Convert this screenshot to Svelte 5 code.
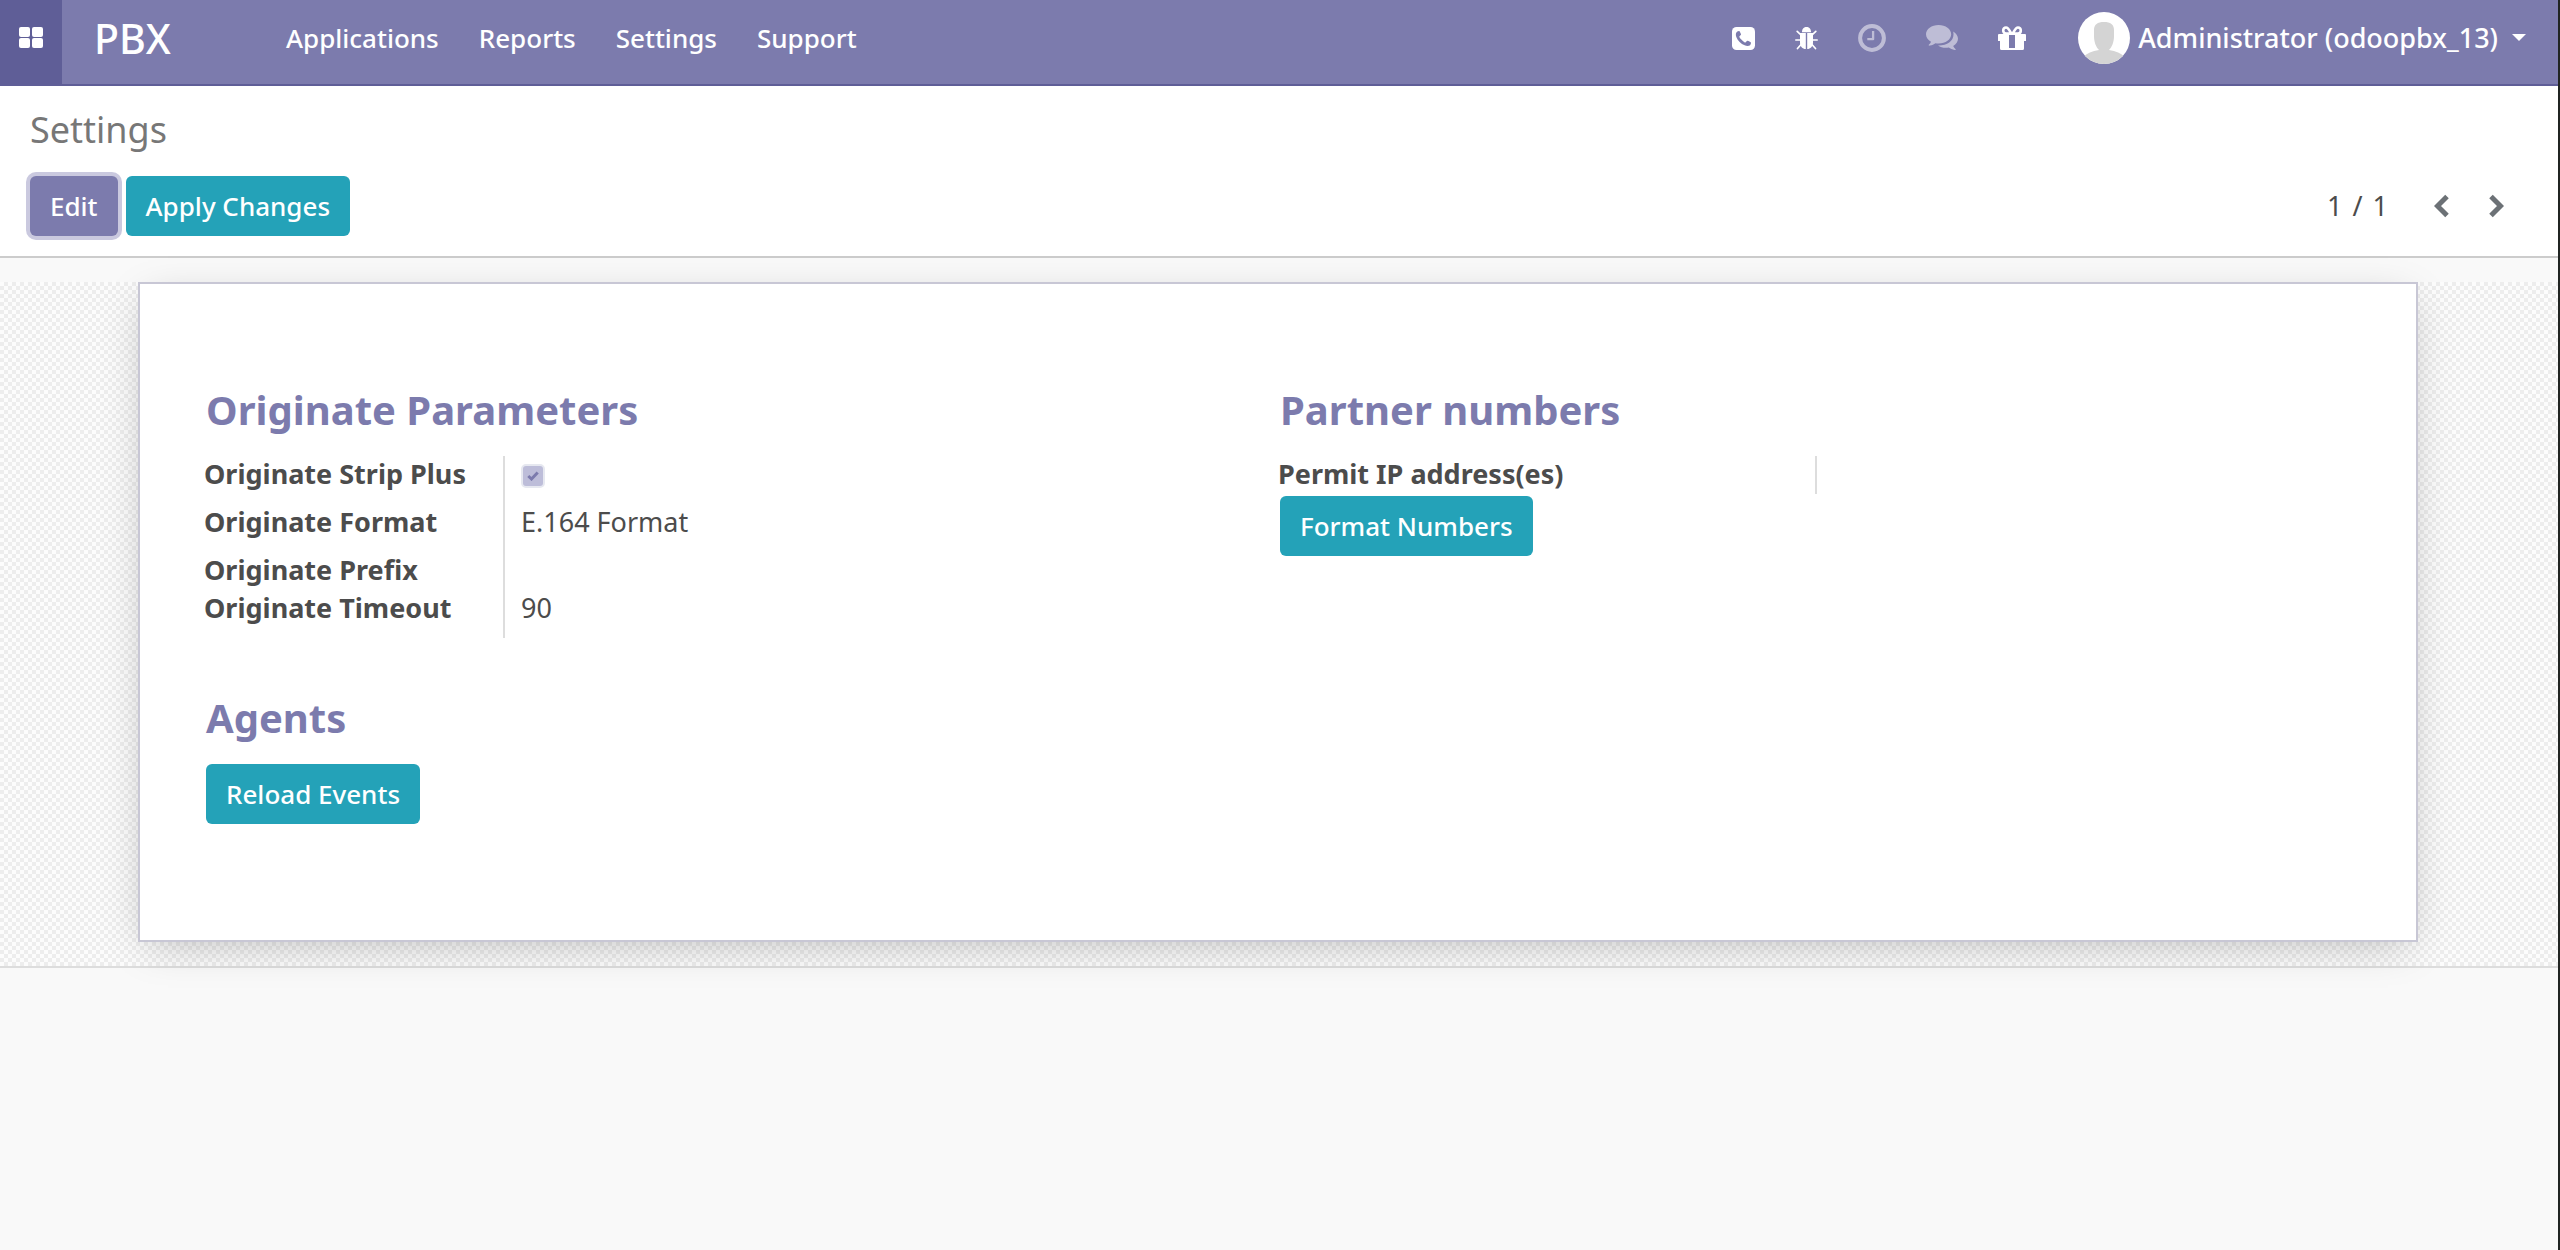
<script>
  const menus = ['Applications', 'Reports', 'Settings', 'Support'];
  let stripPlus = $state(true);
</script>

<div class="page">
  <header class="navbar">
    <button class="apps" aria-label="Applications menu">
      <svg width="25" height="22" viewBox="0 0 25 22" fill="currentColor">
        <rect width="11" height="10" rx="2" />
        <rect x="13" width="11" height="10" rx="2" />
        <rect y="11" width="11" height="10" rx="2" />
        <rect x="13" y="11" width="11" height="10" rx="2" />
      </svg>
    </button>
    <a class="brand" href="#pbx">PBX</a>
    <nav class="menus">
      {#each menus as menu}
        <a href="#{menu.toLowerCase()}">{menu}</a>
      {/each}
    </nav>
    <div class="systray">
      <button aria-label="Phone">
        <svg width="23" height="23" viewBox="0 0 23 23">
          <rect width="23" height="23" rx="4.5" fill="currentColor" />
          <path
            d="M5.3 4.5C6 4.1 6.900 3.800 7.300 4.100C7.800 4.500 8.800 6.600 9 7.200C9.200 8.100 7.300 8.900 7.300 9.700C7.300 10.700 11.600 15 13 15.400C14 15.700 14.700 13.500 15.700 13.700C16.400 13.900 18.500 15 18.900 15.500C19.200 16.100 18.700 17.500 18.100 18.200C17 19.200 14.600 19.300 12.600 18.300C8.900 16.600 5.800 13.600 4.300 9.900C3.400 7.600 3.800 5.500 5.300 4.500Z"
            fill="#7c7bad"
          />
        </svg>
      </button>
      <button aria-label="Debug">
        <svg width="23" height="23" viewBox="0 0 23 23">
          <path d="M7 5.200C7 1.600 9 0 11.500 0S16 1.600 16 5.200Z" fill="currentColor" />
          <path d="M5 6H10.800V22C7.500 22 5 19.600 5 15.500ZM12.200 6H18V15.500C18 19.600 15.500 22 12.200 22Z" fill="currentColor" />
          <path
            d="M6 8 2.200 4.300M17 8 20.800 4.300M5.500 13H.8M17.500 13H22.200M6.300 17.300 2.500 21.500M16.700 17.300 20.500 21.500"
            fill="none"
            stroke="currentColor"
            stroke-width="1.700"
            stroke-linecap="round"
          />
        </svg>
      </button>
      <button class="muted" aria-label="Activities">
        <svg width="28" height="28" viewBox="0 0 28 28" fill="none" stroke="currentColor">
          <circle cx="14" cy="14" r="11.900" stroke-width="4" />
          <path d="M15.100 7V15.200H9.300" stroke-width="2.300" stroke-linejoin="round" />
        </svg>
      </button>
      <button class="muted" aria-label="Messages">
        <svg width="32" height="26" viewBox="0 0 32 26" fill="currentColor">
          <path
            d="M12.600 0C19.600 0 25.200 4.200 25.200 9.300S19.600 18.600 12.600 18.600C11.500 18.600 10.400 18.500 9.400 18.300C7.900 19.400 6.200 20.200 3.900 20.600C2.600 20.800 2.300 20.200 3 19.600C4 18.700 4.700 17.700 5 16.700C1.900 15 0 12.300 0 9.300C0 4.200 5.600 0 12.600 0Z"
          />
          <path
            d="M27.200 6.400C30.100 8.100 32 10.700 32 13.700C32 16.600 30.200 19.300 27.200 21C27.600 22.100 28.400 23.100 29.400 24C30 24.500 29.700 25.200 28.800 25C26.200 24.600 24.300 23.700 22.800 22.600C18.500 23.300 14.700 22.400 12 20.500C21 20.700 27.500 16 27.500 9.500C27.500 8.400 27.400 7.400 27.200 6.400Z"
          />
        </svg>
      </button>
      <button aria-label="What's new">
        <svg width="28" height="25" viewBox="0 0 28 25">
          <path
            d="M0 9Q0 8 1 8H27Q28 8 28 9V15H26V22.500Q26 24 24.500 24H3.500Q2 24 2 22.500V15H0ZM11 9V22H17V9Z"
            fill="currentColor"
            fill-rule="evenodd"
          />
          <path
            d="M13.500 8C11.500 4.500 10.500 1.500 8 1.500C4.300 1.500 4.300 7.500 8 7.500H20C23.700 7.500 23.700 1.500 20 1.500C17.500 1.500 16.500 4.500 14.500 8"
            fill="none"
            stroke="currentColor"
            stroke-width="2.600"
          />
        </svg>
      </button>
      <button class="user">
        <svg class="avatar" width="52" height="52" viewBox="0 0 52 52">
          <defs><clipPath id="face"><circle cx="26" cy="26" r="26" /></clipPath></defs>
          <circle cx="26" cy="26" r="26" fill="#fff" />
          <path
            clip-path="url(#face)"
            fill="#d4d4d4"
            d="M26 10C32.500 10 36 12.500 36 18V24C36 30 34 35 31 38C38 39 43 41.500 47 45V52H5V45C9 41.500 14 39 21 38C18 35 16 30 16 24V18C16 12.500 19.500 10 26 10Z"
          />
        </svg>
        <span>Administrator (odoopbx_13)</span>
        <svg class="caret" width="14" height="8" viewBox="0 0 14 8" fill="currentColor"><path d="M0 0H14L7 7Z" /></svg>
      </button>
    </div>
  </header>

  <section class="control-panel">
    <h1>Settings</h1>
    <div class="toolbar">
      <div class="actions">
        <button class="btn primary focused">Edit</button>
        <button class="btn">Apply Changes</button>
      </div>
      <div class="pager">
        <div class="count"><span>1</span><span>/</span><span>1</span></div>
        <button aria-label="Previous">
          <svg width="15" height="24" viewBox="0 0 15 24"><path d="M13 2.500 3.500 12 13 21.500" /></svg>
        </button>
        <button aria-label="Next">
          <svg width="15" height="24" viewBox="0 0 15 24"><path d="M2 2.500 11.500 12 2 21.500" /></svg>
        </button>
      </div>
    </div>
  </section>

  <main class="form-view">
    <div class="sheet">
      <section class="group originate">
        <h2>Originate Parameters</h2>
        <div class="fields">
          <label for="strip-plus">Originate Strip Plus</label>
          <div class="value">
            <span class="check">
              <input id="strip-plus" type="checkbox" bind:checked={stripPlus} disabled />
              <svg width="12" height="10" viewBox="0 0 12 10"><path d="M1.300 5 4.500 8 10.700 1.500" /></svg>
            </span>
          </div>
          <span class="label">Originate Format</span>
          <div class="value">E.164 Format</div>
          <span class="label">Originate Prefix</span>
          <div class="value empty"></div>
          <span class="label">Originate Timeout</span>
          <div class="value">90</div>
        </div>
      </section>
      <section class="group">
        <h2>Partner numbers</h2>
        <div class="fields">
          <span class="label">Permit IP address(es)</span>
          <div class="value empty"></div>
        </div>
        <button class="btn">Format Numbers</button>
      </section>
      <section class="group">
        <h2>Agents</h2>
        <button class="btn">Reload Events</button>
      </section>
    </div>
  </main>
</div>

<style>
  :global(body) {
    margin: 0;
    background: #f9f9f9;
  }
  .page {
    box-sizing: border-box;
    min-height: 100vh;
    border-right: 2px solid #202422;
    background: #f9f9f9;
    color: #4c4c4c;
    font-family: 'Noto Sans', 'Open Sans', sans-serif;
    font-size: 27px;
    line-height: 36px;
  }
  button {
    margin: 0;
    padding: 0;
    border: 0;
    background: none;
    color: inherit;
    font: inherit;
    cursor: pointer;
  }
  svg {
    display: block;
  }

  .navbar {
    display: flex;
    height: 84px;
    border-bottom: 2px solid #5f5e97;
    background: #7c7bad;
    color: #fff;
    font-weight: 500;
  }
  .apps {
    display: flex;
    align-items: center;
    justify-content: center;
    width: 62px;
    padding-bottom: 8px;
    background: #5f5e97;
  }
  .brand,
  .menus,
  .systray {
    display: flex;
    align-items: center;
    padding-bottom: 8px;
  }
  .navbar a {
    color: inherit;
    text-decoration: none;
  }
  .brand {
    width: 192px;
    padding-left: 32px;
    font-size: 41px;
  }
  .menus {
    gap: 40px;
    font-size: 26px;
  }
  .systray {
    gap: 40px;
    margin-left: auto;
    padding-right: 32px;
  }
  .muted {
    opacity: 0.5;
  }
  .user {
    display: flex;
    align-items: center;
    margin-left: 12px;
  }
  .user span {
    margin: 0 14px 0 8px;
  }

  .control-panel {
    padding: 20px 54px 20px 30px;
    border-bottom: 2px solid #ccc;
    background: #fff;
  }
  h1 {
    margin: 0 0 22px;
    color: #777;
    font-size: 36px;
    font-weight: 400;
    line-height: 48px;
  }
  .toolbar,
  .actions,
  .pager,
  .count {
    display: flex;
    align-items: center;
  }
  .toolbar {
    justify-content: space-between;
  }
  .actions {
    gap: 8px;
  }
  .btn {
    height: 60px;
    padding: 0 20px;
    border-radius: 6px;
    background: #24a2b8;
    color: #fff;
    font-size: 26px;
    font-weight: 500;
  }
  .primary {
    background: #7c7bad;
  }
  .focused {
    box-shadow: 0 0 0 4px #cac9df;
  }
  .pager {
    gap: 40px;
  }
  .count {
    gap: 10px;
    margin-right: 6px;
  }
  .pager path {
    fill: none;
    stroke: #6c7176;
    stroke-width: 5;
  }

  .form-view {
    margin-top: 24px;
    padding: 0 140px 24px 138px;
    border-bottom: 2px solid #ddd;
    background: repeating-conic-gradient(#ededed 0 25%, #fcfcfc 0 50%) 0 0 / 8px 8px;
  }
  .sheet {
    display: grid;
    grid-template-columns: 1fr 1fr;
    row-gap: 56px;
    padding: 102px 64px 116px 64px;
    border: 2px solid #c8c7d5;
    background: #fff;
    box-shadow: 0 10px 40px -10px rgba(0, 0, 0, 0.25);
  }
  h2 {
    margin: 0 0 22px;
    padding-left: 2px;
    color: #7c7bad;
    font-size: 40px;
    font-weight: 700;
    line-height: 48px;
  }
  .group .btn {
    margin-left: 2px;
  }
  .fields {
    display: grid;
    grid-template-columns: 1fr 1fr;
    margin-bottom: 2px;
  }
  .originate .fields {
    grid-template-columns: 299px 1fr;
    margin-bottom: 0;
  }
  .fields label,
  .label {
    font-weight: 700;
  }
  .value {
    padding: 0 16px 12px;
    border-left: 2px solid #ddd;
  }
  .value.empty {
    height: 38px;
    padding-bottom: 0;
  }
  .check {
    display: grid;
    place-items: center;
    width: 24px;
    height: 24px;
    margin-top: 8px;
    margin-bottom: 4px;
  }
  .check > * {
    grid-area: 1 / 1;
  }
  .check input {
    appearance: none;
    box-sizing: border-box;
    width: 24px;
    height: 24px;
    margin: 0;
    border: 2px solid #e6e8f0;
    border-radius: 5px;
    background: #bdbdd9;
  }
  .check path {
    fill: none;
    stroke: #7c7bad;
    stroke-width: 3;
  }
</style>
